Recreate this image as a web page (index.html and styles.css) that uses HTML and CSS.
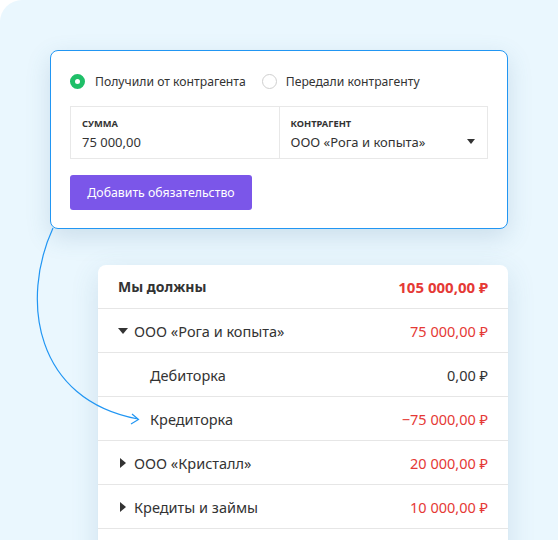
FILE: index.html
```html
<!DOCTYPE html>
<html lang="ru">
<head>
    <meta charset="UTF-8">
    <title>Обязательства</title>
    <link rel="stylesheet" href="styles.css">
</head>
<body>
    <div class="scene">
        <div class="form-card">
            <div class="radios">
                <label class="radio checked"><span class="dot"></span>Получили от контрагента</label>
                <label class="radio"><span class="dot"></span>Передали контрагенту</label>
            </div>
            <div class="fields">
                <div class="field">
                    <div class="field-label">Сумма</div>
                    <div class="field-value">75 000,00</div>
                </div>
                <div class="field select">
                    <div class="field-label">Контрагент</div>
                    <div class="field-value">ООО «Рога и копыта»</div>
                    <span class="caret"></span>
                </div>
            </div>
            <button type="button" class="btn">Добавить обязательство</button>
        </div>

        <div class="list-card">
            <div class="row head">
                <span>Мы должны</span>
                <span class="red">105 000,00 ₽</span>
            </div>
            <div class="row">
                <span class="name"><span class="tri down"></span>ООО «Рога и копыта»</span>
                <span class="red">75 000,00 ₽</span>
            </div>
            <div class="row sub">
                <span>Дебиторка</span>
                <span>0,00 ₽</span>
            </div>
            <div class="row sub">
                <span>Кредиторка</span>
                <span class="red">−75 000,00 ₽</span>
            </div>
            <div class="row">
                <span class="name"><span class="tri right"></span>ООО «Кристалл»</span>
                <span class="red">20 000,00 ₽</span>
            </div>
            <div class="row">
                <span class="name"><span class="tri right"></span>Кредиты и займы</span>
                <span class="red">10 000,00 ₽</span>
            </div>
            <div class="row"></div>
        </div>

        <svg class="link" width="558" height="540" viewBox="0 0 558 540">
            <path d="M53 228 C20 300 35 400 138 419" fill="none" stroke="#2196f3" stroke-width="1.2"/>
            <path d="M132 414 L138.5 419.5 L131 424" fill="none" stroke="#2196f3" stroke-width="1.2"/>
        </svg>
    </div>
</body>
</html>
```

FILE: styles.css
```css
* {
    box-sizing: border-box;
}
body {
    margin: 0;
    background: #fff;
    font-family: 'Noto Sans', 'Open Sans', sans-serif;
    color: #333;
}
.scene {
    position: relative;
    width: 558px;
    height: 540px;
    overflow: hidden;
    background: #eaf7fe;
    border-top-left-radius: 22px;
    padding-top: 50px;
}
.form-card {
    position: relative;
    z-index: 2;
    margin-left: 50px;
    width: 458px;
    background: #fff;
    border: 1px solid #2196f3;
    border-radius: 8px;
    padding: 21px 19px 18px;
    box-shadow: 0 8px 24px rgba(60, 110, 150, 0.18);
}
.radios {
    display: flex;
    gap: 16px;
    height: 18px;
    align-items: center;
}
.radio {
    display: flex;
    align-items: center;
    font-size: 12.2px;
    color: #333;
}
.dot {
    width: 15px;
    height: 15px;
    border-radius: 50%;
    border: 1px solid #cfcfcf;
    margin-right: 9px;
    background: #fff;
}
.radio.checked .dot {
    border: 5px solid #1fbf68;
    margin-right: 10px;
}
.fields {
    display: flex;
    margin-top: 16px;
    height: 53px;
    border: 1px solid #e8e8e8;
}
.field {
    position: relative;
    flex: 1;
    padding: 10px 11px 0;
}
.field + .field {
    border-left: 1px solid #e8e8e8;
}
.field-label {
    font-size: 9.3px;
    font-weight: 700;
    text-transform: uppercase;
    line-height: 14px;
    color: #333;
}
.field-value {
    font-size: 13px;
    line-height: 20px;
    margin-top: 1px;
}
.caret {
    position: absolute;
    right: 12px;
    top: 32px;
    border-left: 4px solid transparent;
    border-right: 4px solid transparent;
    border-top: 5px solid #333;
}
.btn {
    display: block;
    margin-top: 16px;
    width: 182px;
    height: 35px;
    border: none;
    border-radius: 3px;
    background: #7b56e9;
    color: #fff;
    font-family: inherit;
    font-size: 12.3px;
    cursor: pointer;
}
.list-card {
    position: relative;
    z-index: 1;
    margin: 36px 0 0 98px;
    width: 410px;
    background: #fff;
    border-radius: 8px 8px 0 0;
    box-shadow: 0 8px 28px rgba(60, 110, 150, 0.16);
}
.row {
    display: flex;
    justify-content: space-between;
    align-items: center;
    height: 44px;
    padding: 0 20px;
    border-bottom: 1px solid #e6e6e6;
    font-size: 14.5px;
}
.row.head {
    font-weight: 700;
    font-size: 14px;
}
.row.head .red {
    font-size: 15px;
}
.row.sub {
    padding-left: 52px;
}
.name {
    display: flex;
    align-items: center;
}
.tri.down {
    border-left: 5px solid transparent;
    border-right: 5px solid transparent;
    border-top: 6px solid #333;
    margin-right: 6px;
}
.tri.right {
    border-top: 5px solid transparent;
    border-bottom: 5px solid transparent;
    border-left: 6px solid #333;
    margin-left: 2px;
    margin-right: 8px;
}
.red {
    color: #e53935;
}
.link {
    position: absolute;
    left: 0;
    top: 0;
    z-index: 3;
    pointer-events: none;
}
```
